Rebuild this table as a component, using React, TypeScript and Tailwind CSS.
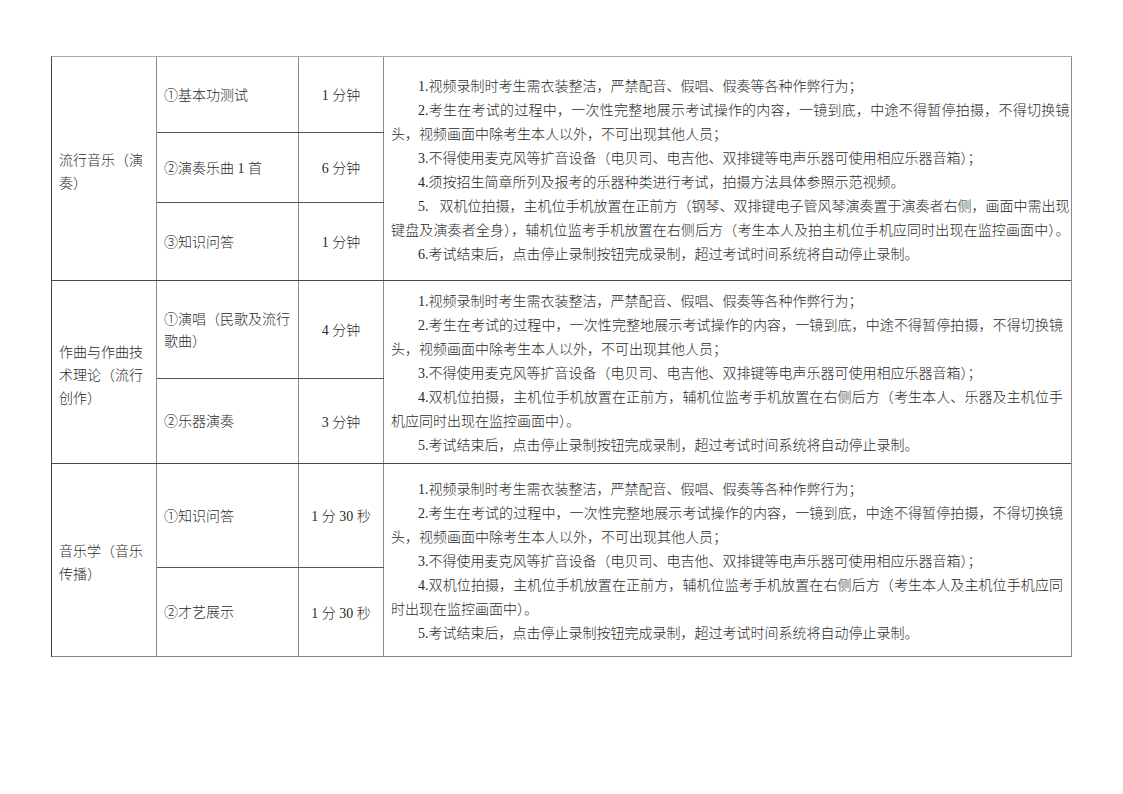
import React from "react";

type Line = { t: React.ReactNode; indent?: boolean; just?: boolean };

const common: Line[] = [
  { t: "1.视频录制时考生需衣装整洁，严禁配音、假唱、假奏等各种作弊行为；", indent: true },
  { t: "2.考生在考试的过程中，一次性完整地展示考试操作的内容，一镜到底，中途不得暂停拍摄，不得切换镜", indent: true, just: true },
  { t: "头，视频画面中除考生本人以外，不可出现其他人员；" },
  { t: "3.不得使用麦克风等扩音设备（电贝司、电吉他、双排键等电声乐器可使用相应乐器音箱）；", indent: true },
];

const end = (n: number): Line => ({
  t: `${n}.考试结束后，点击停止录制按钮完成录制，超过考试时间系统将自动停止录制。`,
  indent: true,
});

const groups = [
  {
    name: "流行音乐（演奏）",
    subs: [
      { item: "①基本功测试", time: "1 分钟", h: "h-[76px]" },
      { item: "②演奏乐曲 1 首", time: "6 分钟", h: "h-[70px]" },
      { item: "③知识问答", time: "1 分钟", h: "h-[77px]" },
    ],
    lines: [
      ...common,
      { t: "4.须按招生简章所列及报考的乐器种类进行考试，拍摄方法具体参照示范视频。", indent: true },
      {
        t: (
          <>
            5.<span className="inline-block w-[11px]" />
            双机位拍摄，主机位手机放置在正前方（钢琴、双排键电子管风琴演奏置于演奏者右侧，画面中需出现
          </>
        ),
        indent: true,
        just: true,
      },
      { t: "键盘及演奏者全身），辅机位监考手机放置在右侧后方（考生本人及拍主机位手机应同时出现在监控画面中）。", just: true },
      end(6),
    ] as Line[],
    last: false,
  },
  {
    name: "作曲与作曲技术理论（流行创作）",
    subs: [
      { item: "①演唱（民歌及流行歌曲）", time: "4 分钟", h: "h-[98px]" },
      { item: "②乐器演奏", time: "3 分钟", h: "h-[84px]" },
    ],
    lines: [
      ...common,
      { t: "4.双机位拍摄，主机位手机放置在正前方，辅机位监考手机放置在右侧后方（考生本人、乐器及主机位手", indent: true, just: true },
      { t: "机应同时出现在监控画面中）。" },
      end(5),
    ] as Line[],
    last: false,
  },
  {
    name: "音乐学（音乐传播）",
    subs: [
      { item: "①知识问答", time: "1 分 30 秒", h: "h-[104px]" },
      { item: "②才艺展示", time: "1 分 30 秒", h: "h-[88px]" },
    ],
    lines: [
      ...common,
      { t: "4.双机位拍摄，主机位手机放置在正前方，辅机位监考手机放置在右侧后方（考生本人及主机位手机应同", indent: true, just: true },
      { t: "时出现在监控画面中）。" },
      end(5),
    ] as Line[],
    last: true,
  },
];

export default function App() {
  return (
    <div
      className="min-h-[794px] w-[1123px] bg-white pt-[56px] pl-[51px] text-[14px] font-light text-[#2a2a2a]"
      style={{ fontFamily: "'Liberation Serif', 'Noto Sans CJK SC', serif" }}
    >
      <div className="w-[1021px] border-t border-l border-r border-t-[#a8a8a8] border-l-[#444444] border-r-[#8a8a8a]">
        {groups.map((g, gi) => (
          <div
            key={gi}
            className={`flex ${g.last ? "border-b border-b-[#8a8a8a]" : "border-b border-b-[#4a4a4a]"}`}
          >
            <div className="flex w-[105px] shrink-0 items-center border-r border-r-[#8a8a8a] px-[7px] pt-[6px] leading-[23px]">
              {g.name}
            </div>
            <div className="flex w-[227px] shrink-0 flex-col">
              {g.subs.map((s, si) => (
                <div
                  key={si}
                  className={`flex ${s.h} ${si < g.subs.length - 1 ? "border-b border-b-[#555555]" : ""}`}
                >
                  <div className="flex w-[142px] shrink-0 items-center border-r border-r-[#8a8a8a] px-[7px] pt-[2px] leading-[22px]">
                    {s.item}
                  </div>
                  <div className="flex w-[85px] shrink-0 items-center justify-center border-r border-r-[#8a8a8a] pt-[2px]">
                    {s.time}
                  </div>
                </div>
              ))}
            </div>
            <div className="flex flex-1 flex-col justify-center pl-[7px] pr-[8px] pt-[4px] leading-[24px]">
              {g.lines.map((l, li) => (
                <div
                  key={li}
                  className={`whitespace-nowrap ${l.indent ? "pl-[27px]" : ""} ${
                    l.just ? "text-justify [text-align-last:justify]" : ""
                  }`}
                >
                  {l.t}
                </div>
              ))}
            </div>
          </div>
        ))}
      </div>
    </div>
  );
}
